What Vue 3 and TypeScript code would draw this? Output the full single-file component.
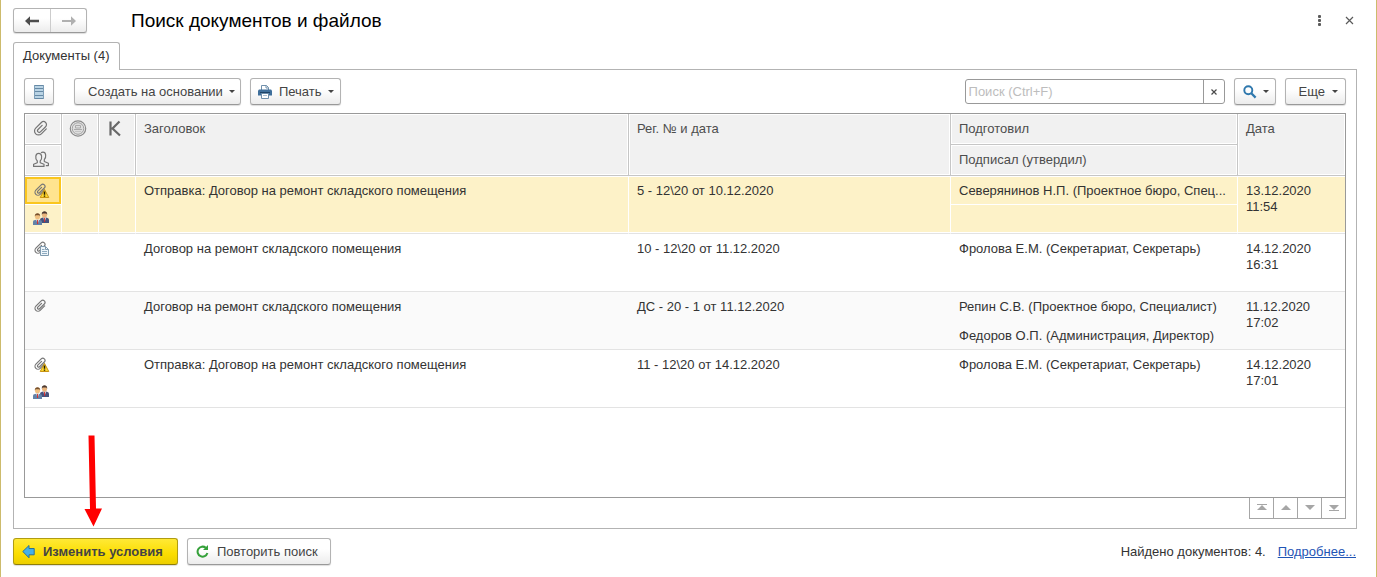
<script setup lang="ts">
import { ref } from 'vue'

type Mark = 'warning' | 'page' | 'plain'

interface DocumentRow {
  id: number
  mark: Mark
  people: boolean
  title: string
  reg: string
  prepared: string
  signed: string
  date: string
  time: string
}

const rows: DocumentRow[] = [
  { id: 1, mark: 'warning', people: true, title: 'Отправка: Договор на ремонт складского помещения', reg: '5 - 12\\20 от 10.12.2020', prepared: 'Северянинов Н.П. (Проектное бюро, Спец...', signed: '', date: '13.12.2020', time: '11:54' },
  { id: 2, mark: 'page', people: false, title: 'Договор на ремонт складского помещения', reg: '10 - 12\\20 от 11.12.2020', prepared: 'Фролова Е.М. (Секретариат, Секретарь)', signed: '', date: '14.12.2020', time: '16:31' },
  { id: 3, mark: 'plain', people: false, title: 'Договор на ремонт складского помещения', reg: 'ДС - 20 - 1 от 11.12.2020', prepared: 'Репин С.В. (Проектное бюро, Специалист)', signed: 'Федоров О.П. (Администрация, Директор)', date: '11.12.2020', time: '17:02' },
  { id: 4, mark: 'warning', people: true, title: 'Отправка: Договор на ремонт складского помещения', reg: '11 - 12\\20 от 14.12.2020', prepared: 'Фролова Е.М. (Секретариат, Секретарь)', signed: '', date: '14.12.2020', time: '17:01' },
]

const selected = ref(1)
const query = ref('')
</script>

<template>
  <main class="window">
    <header class="titlebar">
      <div class="nav">
        <button type="button" class="nav-btn" aria-label="Назад">
          <svg width="14" height="10" viewBox="0 0 14 10"><path d="M0 5 5 0.3V3.7H14V6.3H5V9.7Z" fill="#4d4d4d" /></svg>
        </button>
        <button type="button" class="nav-btn" aria-label="Вперед">
          <svg width="14" height="10" viewBox="0 0 14 10"><path d="M14 5 9 0.3V4H0V6H9V9.7Z" fill="#b0b0b0" /></svg>
        </button>
      </div>
      <h1>Поиск документов и файлов</h1>
      <button type="button" class="bare" aria-label="Меню">
        <svg width="12" height="12" viewBox="0 0 12 12" fill="#5a5a5a"><rect x="4" y="0" width="3" height="3" rx="1" /><rect x="4" y="4" width="3" height="3" rx="1" /><rect x="4" y="8" width="3" height="3" rx="1" /></svg>
      </button>
      <button type="button" class="bare" aria-label="Закрыть">
        <svg width="12" height="12" viewBox="0 0 12 12"><path d="M2 2 9 9M9 2 2 9" stroke="#5a5a5a" stroke-width="1.2" /></svg>
      </button>
    </header>

    <div class="tabs" role="tablist">
      <button type="button" class="tab" role="tab" aria-selected="true">Документы (4)</button>
    </div>

    <section class="panel">
      <div class="toolbar">
        <button type="button" class="btn square" aria-label="Список">
          <svg width="10" height="14" viewBox="0 0 10 14"><rect width="10" height="14" fill="#b9d3e4" /><path d="M0 .5H10M0 3.5H10M0 6.5H10M0 10.5H10M0 13.5H10" stroke="#6689a5" /><path d="M.5 0V14M9.5 0V14" stroke="#7f9fb8" /></svg>
        </button>
        <button type="button" class="btn create">Создать на основании<i class="caret"></i></button>
        <button type="button" class="btn print">
          <svg width="14" height="14" viewBox="0 0 14 14">
            <path d="M3.5 5V.5H8.5L10.5 2.5V5" fill="#fff" stroke="#6f8fab" />
            <path d="M8 .5V3H10.5" fill="none" stroke="#6f8fab" />
            <path d="M1 4.5H13L14 5.5V10.5H0V5.5Z" fill="#3f6f9b" />
            <path d="M2 7.5H12" stroke="#1f4467" />
            <path d="M3.5 8.5H10.5V13.5H3.5Z" fill="#fff" stroke="#6f8fab" />
            <path d="M5 10.5H9" stroke="#a9bccb" />
          </svg>
          Печать<i class="caret"></i>
        </button>
        <div class="search">
          <input v-model="query" type="text" aria-label="Поиск" placeholder="Поиск (Ctrl+F)" />
          <button type="button" aria-label="Очистить">
            <svg width="8" height="8" viewBox="0 0 8 8"><path d="M1.5 1.500 6.500 6.500M6.500 1.500 1.500 6.500" stroke="#4a4a4a" stroke-width="1.200" /></svg>
          </button>
        </div>
        <button type="button" class="btn find" aria-label="Найти">
          <svg width="14" height="14" viewBox="0 0 14 14" fill="none" stroke="#2f78ad"><circle cx="5.300" cy="5.300" r="4" stroke-width="1.900" /><path d="M8.300 8.300 12.600 12.600" stroke-width="2.300" /></svg>
          <i class="caret"></i>
        </button>
        <button type="button" class="btn more">Еще<i class="caret"></i></button>
      </div>

      <div class="grid">
        <table>
          <colgroup>
            <col class="c-icon" /><col class="c-icon" /><col class="c-icon" /><col /><col class="c-reg" /><col class="c-person" /><col class="c-date" />
          </colgroup>
          <thead>
            <tr>
              <th class="ic" aria-label="Файлы">
                <svg width="18" height="18" viewBox="0 0 18 18" fill="none" stroke="#747474" stroke-width="1.2" stroke-linecap="round"><path transform="translate(9 8.500) rotate(45)" d="M4-3.500V3.500A4 4 0 0 1-4 3.500V-4.500A3 3 0 0 1 2-4.500V2.800A1.700 1.700 0 0 1-1.400 2.800V-3" /></svg>
              </th>
              <th class="ic" rowspan="2" aria-label="Подпись">
                <svg width="18" height="18" viewBox="0 0 18 18" fill="none" stroke="#8a8a8a"><circle cx="9" cy="8.500" r="7.700" stroke-width="1.200" /><circle cx="9" cy="8.500" r="5.800" fill="#dedede" stroke="#9c9c9c" /><path d="M6.500 5.500H11.500V8H6.500ZM5 9.500H13M6.500 11.500H7.500M8.500 11.500H9.500M10.500 11.500H11.500" stroke="#aaa" /></svg>
              </th>
              <th class="ic" rowspan="2" aria-label="Контроль">
                <svg width="18" height="18" viewBox="0 0 18 18" fill="none" stroke="#686868" stroke-width="2.200"><path d="M4.500 1.500V15.500M13.500 1.500 6.500 8.500 14 15.500M4.500 8.500H7" /></svg>
              </th>
              <th rowspan="2">Заголовок</th>
              <th rowspan="2">Рег. № и дата</th>
              <th>Подготовил</th>
              <th rowspan="2" class="last">Дата</th>
            </tr>
            <tr>
              <th class="ic" aria-label="Участники">
                <svg width="18" height="18" viewBox="0 0 18 18" fill="none" stroke="#747474" stroke-width="1.200" stroke-linejoin="round"><path d="M1.600 15.400V13.200L5.300 11.700V10C2.700 7.300 3.500 2.400 6.700 2.400S10.700 7.300 8.200 10V11.700L12 13.200V15.400Z" /><path d="M9 1.900C9.600 1.300 10.200 1.100 11 1.100C14.200 1.100 14.500 6.300 12.300 8.600V10.500L16.400 12.200V14.600H13.800" /></svg>
              </th>
              <th>Подписал (утвердил)</th>
            </tr>
          </thead>
          <tbody v-for="row in rows" :key="row.id" :class="{ selected: row.id === selected }" @click="selected = row.id">
            <tr>
              <td class="ic mark">
                <svg width="16" height="16" viewBox="0 0 16 16">
                  <path transform="translate(6.500 6.800) rotate(45)" d="M3-2.800V3.500A3 3 0 0 1-3 3.500V-4A2.200 2.200 0 0 1 1.400-4V2.800A1.200 1.200 0 0 1-1 2.800V-2.500" fill="none" stroke="#777" stroke-width="1.200" stroke-linecap="round" />
                  <g v-if="row.mark === 'warning'">
                    <path d="M10.5 6.500 14.800 14.500H6.200Z" fill="#ffd92e" stroke="#c89412" stroke-linejoin="round" />
                    <path d="M10.500 8.500V11.700M10.500 12.500V13.800" stroke="#201a00" stroke-width="1.500" />
                  </g>
                  <g v-if="row.mark === 'page'">
                    <path d="M6.500 5.500H11.500L14.500 8.500V14.500H6.500Z" fill="#eef5fa" stroke="#7f9aae" />
                    <path d="M11.500 5.500V8.500H14.500" fill="none" stroke="#7f9aae" />
                    <path d="M8 8.500H10.500M8 10.500H13M8 12.500H13" stroke="#8eabc0" />
                  </g>
                </svg>
              </td>
              <td rowspan="2"></td>
              <td rowspan="2"></td>
              <td rowspan="2">{{ row.title }}</td>
              <td rowspan="2">{{ row.reg }}</td>
              <td class="sub">{{ row.prepared }}</td>
              <td rowspan="2" class="last">{{ row.date }}<br />{{ row.time }}</td>
            </tr>
            <tr>
              <td class="ic">
                <svg v-if="row.people" width="16" height="16" viewBox="0 0 16 16">
                  <path d="M7 12V8.500Q7 7.300 9 6.800L11.500 6.300 14 6.800Q16 7.300 16 8.500V12Z" fill="#46527d" />
                  <path d="M10.300 6.500 11.600 11 13 6.500Z" fill="#fff" /><path d="M11.600 7V11" stroke="#d02525" />
                  <ellipse cx="11.500" cy="3.800" rx="2.500" ry="3" fill="#eab57d" />
                  <path d="M8.800 3.700C8.300-.8 14.700-.8 14.200 3.700L13.300 2.400H9.700Z" fill="#4b3931" />
                  <path d="M0 14V10.500Q0 9.300 2 8.900L4.500 8.400 7 8.900Q9 9.300 9 10.500V14Z" fill="#6283a8" />
                  <path d="M3.200 8.500 4.600 13 6 8.500Z" fill="#fff" /><path d="M4.600 9V13" stroke="#d02525" />
                  <ellipse cx="4.500" cy="5.600" rx="2.500" ry="3" fill="#f0c080" />
                  <path d="M1.800 5.500C1.300 1 7.700 1 7.200 5.500L6.300 4.200H2.700Z" fill="#76502d" />
                </svg>
              </td>
              <td>{{ row.signed }}</td>
            </tr>
          </tbody>
        </table>
      </div>
      <div class="pager">
        <button type="button" aria-label="В начало"><svg width="10" height="8" viewBox="0 0 10 8" fill="#a6a6a6"><path d="M0 0H10V1H0ZM5 1 10 6H0Z" /></svg></button>
        <button type="button" aria-label="Вверх"><svg width="10" height="8" viewBox="0 0 10 8" fill="#a6a6a6"><path d="M5 1 10 6H0Z" /></svg></button>
        <button type="button" aria-label="Вниз"><svg width="10" height="8" viewBox="0 0 10 8" fill="#a6a6a6"><path d="M0 1H10L5 6Z" /></svg></button>
        <button type="button" aria-label="В конец"><svg width="10" height="8" viewBox="0 0 10 8" fill="#a6a6a6"><path d="M0 1H10L5 6ZM0 6H10V7H0Z" /></svg></button>
      </div>
    </section>

    <footer class="footer">
      <button type="button" class="btn primary">
        <svg width="13" height="14" viewBox="0 0 13 14"><path d="M.8 6.500 7 .5V3.500H12.200V9.800H7V12.800Z" fill="#44b0e8" stroke="#2b7196" stroke-linejoin="round" /></svg>
        Изменить условия
      </button>
      <button type="button" class="btn repeat">
        <svg width="13" height="13" viewBox="0 0 13 13"><path d="M9.800 2.800A5 5 0 1 0 11.400 8" fill="none" stroke="#35a13a" stroke-width="2" /><path d="M7 4.900H12V0Z" fill="#35a13a" /></svg>
        Повторить поиск
      </button>
      <span class="found">Найдено документов: 4.</span>
      <a href="#">Подробнее...</a>
      <svg class="pointer" width="20" height="92" viewBox="0 0 20 92"><path d="M4.500.5H10.500L12 73.500H18L9.500 91.500 .5 74H6Z" fill="#f00" /></svg>
    </footer>
  </main>
</template>

<style>
body {
  margin: 0;
  background: #fff;
}
</style>

<style scoped>
.window {
  box-sizing: border-box;
  min-height: 100vh;
  display: flex;
  flex-direction: column;
  padding: 8px 19px 12px 12px;
  border: solid #cdbb6c;
  border-width: 0 1px;
  background: #fff;
  color: #333;
  font: 13px/16px "Liberation Sans", Arial, sans-serif;
}
button,
input {
  box-sizing: border-box;
  font: inherit;
  color: inherit;
  margin: 0;
  padding: 0;
}
svg {
  display: block;
  flex: none;
}
.titlebar {
  display: flex;
  align-items: center;
  height: 25px;
}
.nav {
  display: flex;
  height: 25px;
  box-sizing: border-box;
  border: 1px solid #b3b3b3;
  border-bottom-color: #999;
  border-radius: 3px;
  box-shadow: 0 1px 1px #ddd;
  background: linear-gradient(#fff 40%, #ececec);
}
.nav-btn {
  display: flex;
  align-items: center;
  justify-content: center;
  width: 36px;
  border: 0;
  background: none;
}
.nav-btn + .nav-btn {
  border-left: 1px solid #ccc;
}
h1 {
  flex: 1;
  margin: 0 0 0 44px;
  font-size: 19px;
  line-height: 24px;
  font-weight: 400;
  color: #000;
}
.bare {
  display: flex;
  align-items: center;
  justify-content: center;
  width: 14px;
  height: 16px;
  margin-left: 16px;
  border: 0;
  background: none;
}
.tabs {
  display: flex;
  margin-top: 9px;
}
.tab {
  height: 28px;
  padding: 0 9px 2px;
  margin-bottom: -1px;
  border: 1px solid #b3b3b3;
  border-bottom: 0;
  border-radius: 3px 3px 0 0;
  background: #fff;
  z-index: 1;
}
.panel {
  flex: 1;
  display: flex;
  flex-direction: column;
  padding: 8px 10px 9px;
  border: 1px solid #b3b3b3;
}
.toolbar {
  display: flex;
  margin-bottom: 8px;
}
.btn {
  display: flex;
  align-items: center;
  height: 27px;
  border: 1px solid #b3b3b3;
  border-bottom-color: #999;
  border-radius: 3px;
  box-shadow: 0 1px 1px #ddd;
  background: linear-gradient(#fff 40%, #ececec);
  color: #444;
  white-space: nowrap;
}
.caret {
  border: 3px solid transparent;
  border-top-color: #444;
  border-bottom: 0;
  margin-left: 6px;
}
.square {
  width: 30px;
  justify-content: center;
}
.create {
  margin-left: 20px;
  padding: 0 5px 0 13px;
}
.print {
  gap: 7px;
  margin-left: 9px;
  padding: 0 6px 0 7px;
}
.print .caret {
  margin-left: 0;
}
.search {
  display: flex;
  box-sizing: border-box;
  width: 260px;
  height: 25px;
  margin: 1px 9px 0 auto;
  border: 1px solid #999;
  border-radius: 3px;
}
.search input {
  flex: 1;
  min-width: 0;
  padding: 0 3px;
  border: 0;
  background: none;
}
.search input::placeholder {
  color: #bdbdbd;
  opacity: 1;
}
.search button {
  display: flex;
  align-items: center;
  justify-content: center;
  width: 21px;
  border: 0;
  border-left: 1px solid #999;
  background: none;
}
.find {
  padding: 0 6px 0 8px;
  margin-right: 9px;
}
.more {
  padding: 0 7px 0 13px;
}
.more .caret {
  margin-left: 7px;
}
.grid {
  flex: 1;
  border: 1px solid #999;
}
table {
  width: 100%;
  table-layout: fixed;
  border-collapse: separate;
  border-spacing: 0;
}
.c-icon {
  width: 37px;
}
.c-reg {
  width: 322px;
}
.c-person {
  width: 287px;
}
.c-date {
  width: 107px;
}
th {
  box-sizing: border-box;
  height: 31px;
  padding: 7px 8px 6px;
  border: solid #c6c6c6;
  border-width: 0 1px 1px 0;
  box-shadow: inset 0 0 0 1px #fff;
  background: #f1f1f1;
  color: #4d4d4d;
  font-weight: 400;
  text-align: left;
  vertical-align: top;
}
td {
  box-sizing: border-box;
  height: 29px;
  padding: 7px 8px 5px;
  overflow: hidden;
  text-overflow: ellipsis;
  white-space: nowrap;
  vertical-align: top;
}
th.ic {
  padding: 6px 7px;
}
td.ic {
  padding: 6px 8px;
}
td.mark {
  padding: 7px 9px 5px;
}
td[rowspan],
tr + tr td {
  border-bottom: 1px solid #e3e3e3;
}
tbody:nth-of-type(odd) td {
  background: #fafafa;
}
tbody.selected td {
  background: #fdf2c8;
  border-right: 1px solid #fff;
  box-shadow: inset 0 -1px #fff;
}
tbody.selected tr:first-child td {
  box-shadow: inset 0 1px #fff, inset 0 -1px #fff;
}
tbody.selected tr:first-child td.mark {
  background: #ffe48f;
  box-shadow: inset 0 1px #fff, inset 0 -1px #fff, inset 0 3px #fac61f, inset 0 -3px #fac61f, inset 2px 0 #fac61f, inset -2px 0 #fac61f;
}
.last,
tbody.selected .last {
  border-right: 0;
}
.pager {
  display: flex;
  align-self: flex-end;
}
.pager button {
  display: flex;
  align-items: center;
  justify-content: center;
  width: 25px;
  height: 21px;
  margin-left: -1px;
  border: 1px solid #a6a6a6;
  border-top: 0;
  background: #fff;
}
.footer {
  position: relative;
  display: flex;
  align-items: center;
  margin-top: 9px;
  padding-right: 1px;
}
.primary {
  gap: 8px;
  padding: 0 14px 0 8px;
  border-color: #b09c12;
  border-bottom-color: #8f7e0a;
  background: linear-gradient(#ffe936, #fbdd00 60%, #ecce00);
  font-weight: 700;
}
.repeat {
  gap: 8px;
  margin-left: 9px;
  padding: 0 12px 0 8px;
}
.found {
  margin-left: auto;
}
a {
  margin-left: 12px;
  color: #1f55b5;
}
.pointer {
  position: absolute;
  left: 71px;
  bottom: 38px;
  pointer-events: none;
}
</style>
